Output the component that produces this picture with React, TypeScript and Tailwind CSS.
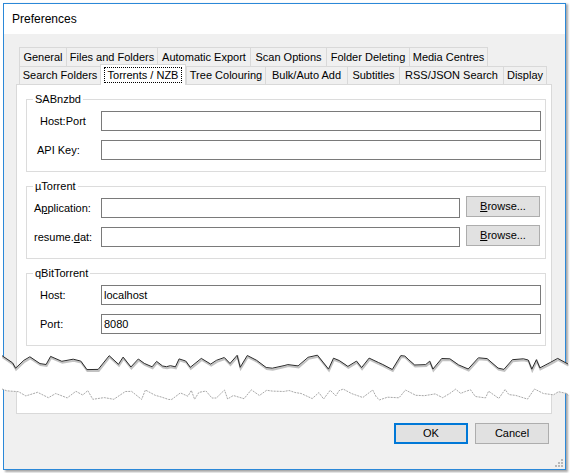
import React from 'react';

const row1 = [
  { label: 'General', w: 'w-[47px]' },
  { label: 'Files and Folders', w: 'w-[91px]' },
  { label: 'Automatic Export', w: 'w-[93px]' },
  { label: 'Scan Options', w: 'w-[76px]' },
  { label: 'Folder Deleting', w: 'w-[83px]' },
  { label: 'Media Centres', w: 'w-[79px]' },
];

const row2 = [
  { label: 'Search Folders', w: 'w-[81px]' },
  { label: 'Torrents / NZB', w: 'w-[86px]', active: true },
  { label: 'Tree Colouring', w: 'w-[79px]' },
  { label: 'Bulk/Auto Add', w: 'w-[82px]' },
  { label: 'Subtitles', w: 'w-[52px]' },
  { label: 'RSS/JSON Search', w: 'w-[104px]' },
  { label: 'Display', w: 'w-[44px]' },
];

// torn paper edge, deterministic so every render looks the same
const jag = (seed: number, yMin: number, yMax: number) => {
  let s = seed;
  const rnd = () => {
    s = (s * 16807) % 2147483647;
    return s / 2147483647;
  };
  const pts: [number, number][] = [];
  let x = 2;
  let up = true;
  while (x < 568) {
    const y = up ? yMin + rnd() * (yMax - yMin) * 0.45 : yMin + (yMax - yMin) * (0.5 + rnd() * 0.5);
    pts.push([x, y]);
    x += 3 + rnd() * 9;
    if (rnd() > 0.35) up = !up;
  }
  pts.push([568, yMin + (yMax - yMin) * 0.6]);
  return pts;
};

const topEdge = jag(12345, 355, 370);
const bottomEdge = jag(777, 389, 400);
const toStr = (p: [number, number][]) => p.map(([x, y]) => `${x.toFixed(1)},${y.toFixed(1)}`).join(' ');

const Input = ({ value, w = 'w-[440px]' }: { value?: string; w?: string }) => (
  <div className={`${w} h-[20px] border border-[#7a7a7a] bg-white flex items-center pl-[2px] text-black`}>
    {value}
  </div>
);

const Browse = () => (
  <button className="w-[74px] h-[21px] -mt-[2px] ml-[6px] border border-[#adadad] bg-[#e1e1e1] text-black flex items-center justify-center">
    <span>
      <span className="underline">B</span>rowse...
    </span>
  </button>
);

const Group = ({ title, children }: { title: string; children: React.ReactNode }) => (
  <div className="relative ml-[9px] w-[520px] shrink-0 border border-[#dcdcdc] pt-[11px] pb-[11px] flex flex-col gap-[9px]">
    <span className="absolute -top-[8px] left-[6px] bg-white px-[2px] leading-[14px]">{title}</span>
    {children}
  </div>
);

const Row = ({ label, pl, children }: { label: React.ReactNode; pl: string; children: React.ReactNode }) => (
  <div className="flex items-start h-[20px]">
    <div className={`w-[74px] h-[20px] flex items-center ${pl}`}>{label}</div>
    {children}
  </div>
);

export default function App() {
  return (
    <div
      className="relative w-[570px] h-[473px] bg-white text-[11px] text-black overflow-hidden"
      style={{ fontFamily: '"Liberation Sans", Arial, sans-serif' }}
    >
      {/* upper half of the dialog */}
      <div className="ml-[3px] pt-[3px]">
        <div className="w-[563px] h-[369px] border-x border-t border-[#2b88d8] shadow-[2px_1px_2px_rgba(0,0,0,0.35)] flex flex-col overflow-hidden">
          <div className="h-[30px] shrink-0 bg-white pl-[8px] flex items-center text-[12px]">Preferences</div>
          <div className="flex-1 min-h-0 overflow-hidden bg-[#f0f0f0] pt-[13px] pl-[12px] pr-[13px]">
            <div className="flex pl-[3px] h-[19px]">
              {row1.map((t, i) => (
                <div
                  key={t.label}
                  className={`${t.w} h-[19px] border-t border-l border-[#d9d9d9] ${i === row1.length - 1 ? 'border-r' : ''} flex items-center justify-center whitespace-nowrap`}
                >
                  {t.label}
                </div>
              ))}
            </div>
            <div className="flex items-end pl-[3px] h-[18px]">
              {row2.map((t, i) =>
                t.active ? (
                  <div
                    key={t.label}
                    className={`${t.w} h-[21px] -mb-[1px] relative z-10 bg-white border-t border-x border-[#d9d9d9] flex items-center justify-center whitespace-nowrap`}
                  >
                    <span className="border border-dotted border-black px-[3px] leading-[14px]">{t.label}</span>
                  </div>
                ) : (
                  <div
                    key={t.label}
                    className={`${t.w} h-[18px] border-t border-l border-[#d9d9d9] ${i === row2.length - 1 ? 'border-r' : ''} flex items-center justify-center whitespace-nowrap`}
                  >
                    {t.label}
                  </div>
                )
              )}
            </div>
            <div className="w-[536px] h-[300px] bg-white border border-[#d9d9d9] pt-[14px] flex flex-col gap-[14px]">
              <Group title="SABnzbd">
                <Row label="Host:Port" pl="pl-[13px]">
                  <Input />
                </Row>
                <Row label="API Key:" pl="pl-[10px]">
                  <Input />
                </Row>
              </Group>
              <Group title="µTorrent">
                <Row
                  label={
                    <span>
                      A<span className="underline">p</span>plication:
                    </span>
                  }
                  pl="pl-[7px]"
                >
                  <Input w="w-[359px]" />
                  <Browse />
                </Row>
                <Row
                  label={
                    <span>
                      resume.<span className="underline">d</span>at:
                    </span>
                  }
                  pl="pl-[7px]"
                >
                  <Input w="w-[359px]" />
                  <Browse />
                </Row>
              </Group>
              <Group title="qBitTorrent">
                <Row label="Host:" pl="pl-[13px]">
                  <Input value="localhost" />
                </Row>
                <Row label="Port:" pl="pl-[13px]">
                  <Input value="8080" />
                </Row>
              </Group>
            </div>
          </div>
        </div>
      </div>

      {/* lower half of the dialog */}
      <div className="ml-[3px] mt-[14px]">
        <div className="relative w-[563px] h-[84px] border-x border-b border-[#2b88d8] shadow-[2px_2px_2px_rgba(0,0,0,0.35)] bg-[#f0f0f0] pl-[12px] pr-[16px] flex flex-col">
          <div className="w-[536px] h-[28px] bg-white border-x border-b border-[#d9d9d9]" />
          <div className="mt-[9px] flex justify-end gap-[7px]">
            <button className="w-[74px] h-[21px] border-2 border-[#0078d7] bg-[#e1e1e1] flex items-center justify-center">
              OK
            </button>
            <button className="w-[74px] h-[21px] border border-[#adadad] bg-[#e1e1e1] flex items-center justify-center">
              Cancel
            </button>
          </div>
          <svg className="absolute right-[1px] bottom-[1px]" width="10" height="10" viewBox="0 0 10 10">
            {[
              [7, 1],
              [7, 4],
              [4, 4],
              [7, 7],
              [4, 7],
              [1, 7],
            ].map(([x, y]) => (
              <rect key={`${x}-${y}`} x={x} y={y} width="2" height="2" fill="#b8b8b8" />
            ))}
          </svg>
        </div>
      </div>

      {/* torn paper edges */}
      <svg className="absolute left-0 top-[348px]" width="570" height="28" viewBox="0 348 570 28">
        <polygon points={`0,376 0,362 ${toStr(topEdge)} 570,362 570,376`} fill="#ffffff" />
        <polyline points={toStr(topEdge.map(([x, y]) => [x + 0.5, y + 1.5]))} fill="none" stroke="#9a9a9a" strokeWidth="2" opacity="0.6" />
        <polyline points={toStr(topEdge)} fill="none" stroke="#2a2a2a" strokeWidth="1" />
      </svg>
      <svg className="absolute left-0 top-[383px]" width="570" height="20" viewBox="0 383 570 20">
        <polygon points={`0,383 570,383 570,394 ${toStr([...bottomEdge].reverse())} 0,394`} fill="#ffffff" />
        <polyline points={toStr(bottomEdge)} fill="none" stroke="#a8a8a8" strokeWidth="1" strokeDasharray="2 1" />
      </svg>
    </div>
  );
}
